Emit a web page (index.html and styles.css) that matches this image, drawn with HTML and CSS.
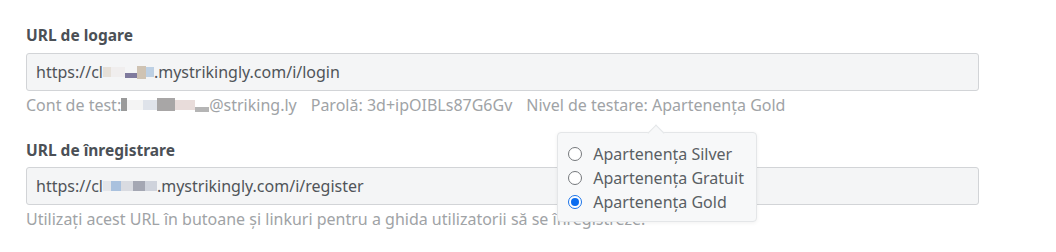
FILE: index.html
```html
<!DOCTYPE html>
<html lang="ro">
<head>
<meta charset="utf-8">
<link rel="stylesheet" href="styles.css">
</head>
<body>
<div class="page">
  <div class="field">
    <div class="label">URL de logare</div>
    <div class="input">https://cl<span class="blur"><i class="b1"></i><i class="b2"></i><i class="b3"></i><i class="b4"></i><i class="b5"></i></span>.mystrikingly.com/i/login</div>
    <div class="hint">
      <span>Cont de test:<span class="blur"><i class="c1"></i><i class="c2"></i><i class="c3"></i><i class="c4"></i><i class="c5"></i><i class="c6"></i></span>@striking.ly</span>
      <span>Parolă: 3d+ipOIBLs87G6Gv</span>
      <span class="level">Nivel de testare: Apartenența Gold
        <div class="popover">
          <label class="opt"><span class="radio"></span>Apartenența Silver</label>
          <label class="opt"><span class="radio"></span>Apartenența Gratuit</label>
          <label class="opt"><span class="radio on"></span>Apartenența Gold</label>
        </div>
      </span>
    </div>
  </div>
  <div class="field second">
    <div class="label">URL de înregistrare</div>
    <div class="input">https://cl<span class="blur"><i class="d1"></i><i class="d2"></i><i class="d3"></i><i class="d4"></i><i class="d5"></i></span>.mystrikingly.com/i/register</div>
    <div class="hint">Utilizați acest URL în butoane și linkuri pentru a ghida utilizatorii să se înregistreze.</div>
  </div>
</div>
</body>
</html>
```
FILE: styles.css
```css
* { box-sizing: border-box; }
html, body { margin: 0; padding: 0; background: #fff; }
body { font-family: "Noto Sans", "Open Sans", sans-serif; }
.page { padding: 24px 77px 0 26px; display: flex; flex-direction: column; gap: 23px; }
.field { display: flex; flex-direction: column; }
.label { font-size: 15.5px; font-weight: 700; color: #4b5056; line-height: 22px; margin-bottom: 7px; }
.second .label { margin-bottom: 6px; }
.input {
  height: 38px; border: 1px solid #d2d4d7; border-radius: 3px; background: #f4f5f6;
  font-size: 16px; color: #505459; padding: 0 9px; display: flex; align-items: center;
}
.hint { font-size: 16px; color: #a0a3a6; line-height: 22px; margin-top: 3px; display: flex; gap: 14px; white-space: nowrap; }
.level { position: relative; }
.blur { display: inline-flex; align-items: center; height: 14px; }
.blur i { display: inline-block; height: 10px; }
.b1 { width: 8px; background: #e6e0d8; }
.b2 { width: 14px; background: #f0eeee; }
.b3 { width: 12px; background: #7f7a9d; height: 5px !important; align-self: flex-end; margin-bottom: 1px; }
.b4 { width: 9px; background: #cfc3b3; height: 13px !important; }
.b5 { width: 8px; background: #bdd0e4; }
.c1 { width: 6px; background: #9a9a9a; height: 13px !important; }
.c2 { width: 16px; background: #f4f4f4; }
.c3 { width: 14px; background: #dfe3ea; }
.c4 { width: 18px; background: #a8a6a6; height: 13px !important; }
.c5 { width: 20px; background: #e8dcda; }
.c6 { width: 14px; background: #b5b5b5; height: 5px !important; align-self: flex-end; }
.d1 { width: 8px; background: #e4e6ea; }
.d2 { width: 10px; background: #a9c1de; }
.d3 { width: 12px; background: #d9dbe1; }
.d4 { width: 12px; background: #a4a7b3; }
.d5 { width: 12px; background: #cfd3dc; }
.popover {
  position: absolute; left: 31px; top: 38px; width: 200px; height: 90px;
  background: #f7f8f9; border: 1px solid #e4e6e8; border-radius: 4px;
  box-shadow: 0 1px 4px rgba(0,0,0,0.06);
  padding: 9px 0 0 10px; display: flex; flex-direction: column;
  color: #5a5f64; z-index: 2;
}
.popover::before {
  content: ""; position: absolute; left: 92px; top: -6px; width: 11px; height: 11px;
  background: #f7f8f9; border-left: 1px solid #e4e6e8; border-top: 1px solid #e4e6e8;
  transform: rotate(45deg);
}
.opt { display: flex; align-items: center; gap: 11px; font-size: 16px; line-height: 24px; }
.radio {
  width: 14px; height: 14px; border-radius: 50%; border: 1px solid #75787c; background: #fff;
  flex: none;
}
.radio.on { border: 1px solid #1a73e8; background: #fff; position: relative; }
.radio.on::after { content: ""; position: absolute; inset: 2px; border-radius: 50%; background: #0a6cf0; }
```
